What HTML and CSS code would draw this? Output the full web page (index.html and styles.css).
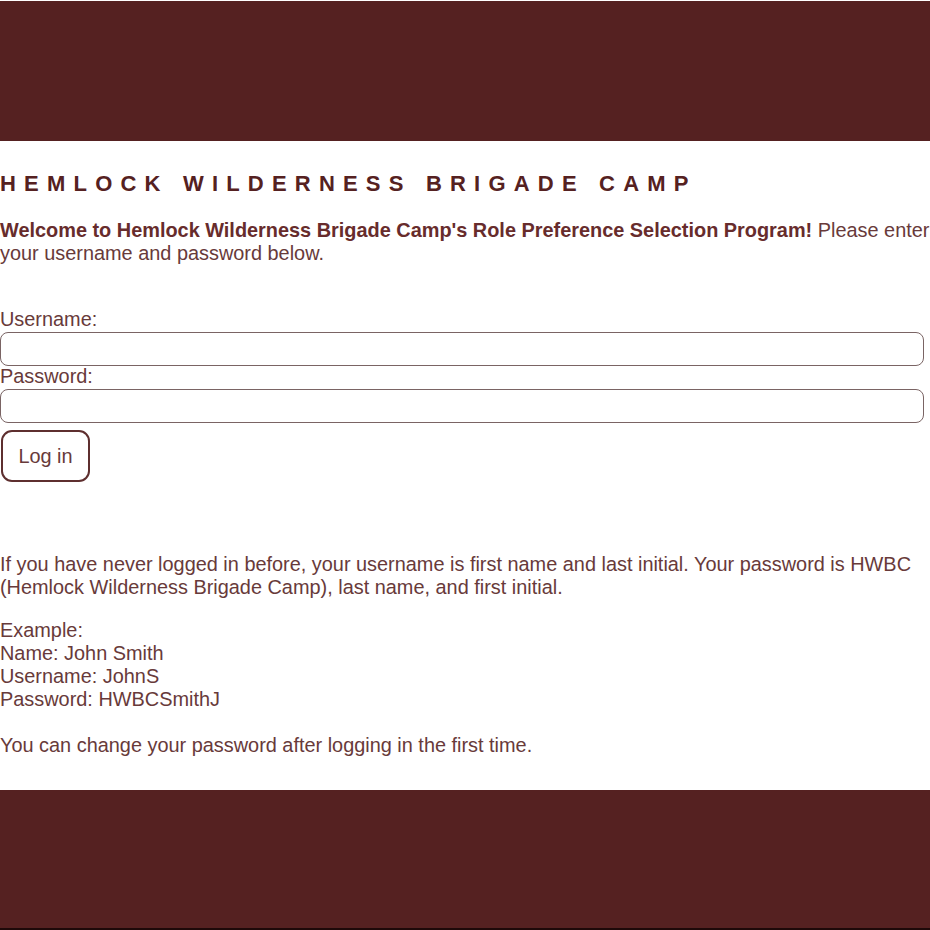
FILE: index.html
```html
<!DOCTYPE html>
<html>
<head>
<meta charset="utf-8">
<link rel="stylesheet" href="styles.css">
</head>
<body>
<header class="top-bar"></header>
<main class="content">
  <h1 class="title">HEMLOCK WILDERNESS BRIGADE CAMP</h1>
  <p class="intro"><strong>Welcome to Hemlock Wilderness Brigade Camp's Role Preference Selection Program!</strong> Please enter your username and password below.</p>
  <form class="login">
    <label class="field-label" for="u">Username:</label>
    <input class="field" id="u" type="text">
    <label class="field-label" for="p">Password:</label>
    <input class="field" id="p" type="password">
    <button class="btn" type="button">Log in</button>
  </form>
  <p class="info">If you have never logged in before, your username is first name and last initial. Your password is HWBC (Hemlock Wilderness Brigade Camp), last name, and first initial.</p>
  <p class="info">Example:<br>Name: John Smith<br>Username: JohnS<br>Password: HWBCSmithJ</p>
  <p class="info info-last">You can change your password after logging in the first time.</p>
</main>
<footer class="bottom-bar"></footer>
</body>
</html>
```

FILE: styles.css
```css
html, body {
  margin: 0;
  padding: 0;
  overflow: hidden;
  background: #ffffff;
}
body {
  font-family: "Liberation Sans", Arial, sans-serif;
  color: #683a3a;
  font-size: 19.9px;
  line-height: 23px;
  width: 930px;
}
.top-bar {
  height: 140px;
  margin-top: 1px;
  background: #552121;
}
.content {
  width: 944px;
  padding-top: 31px;
  padding-bottom: 33px;
}
.title {
  margin: 0 0 23px 0;
  font-size: 22px;
  line-height: 24px;
  font-weight: bold;
  letter-spacing: 8.2px;
  color: #552121;
}
.intro {
  margin: 0 0 44px 0;
}
.intro strong {
  color: #672c2c;
}
.login {
  display: flex;
  flex-direction: column;
  align-items: flex-start;
  margin-bottom: 71px;
}
.field-label {
  line-height: 21px;
  margin-bottom: 2px;
}
.field {
  box-sizing: border-box;
  width: 924px;
  height: 34px;
  border: 1px solid #7a6464;
  border-radius: 8px;
  background: #fff;
  margin: 0;
  padding: 0 8px;
  font-size: 18px;
}
.btn {
  margin: 7px 0 0 1px;
  width: 89px;
  height: 52px;
  border: 2px solid #5e2f2f;
  border-radius: 11px;
  background: #fff;
  color: #683a3a;
  font-family: "Liberation Sans", Arial, sans-serif;
  font-size: 19.9px;
  padding: 0;
}
.info {
  margin: 0 0 20px 0;
  width: 925px;
  line-height: 23px;
}
.info-last {
  margin-top: 23px;
  margin-bottom: 0;
}
.bottom-bar {
  height: 138px;
  background: #552121;
  border-bottom: 2px solid #1e0909;
}
```
